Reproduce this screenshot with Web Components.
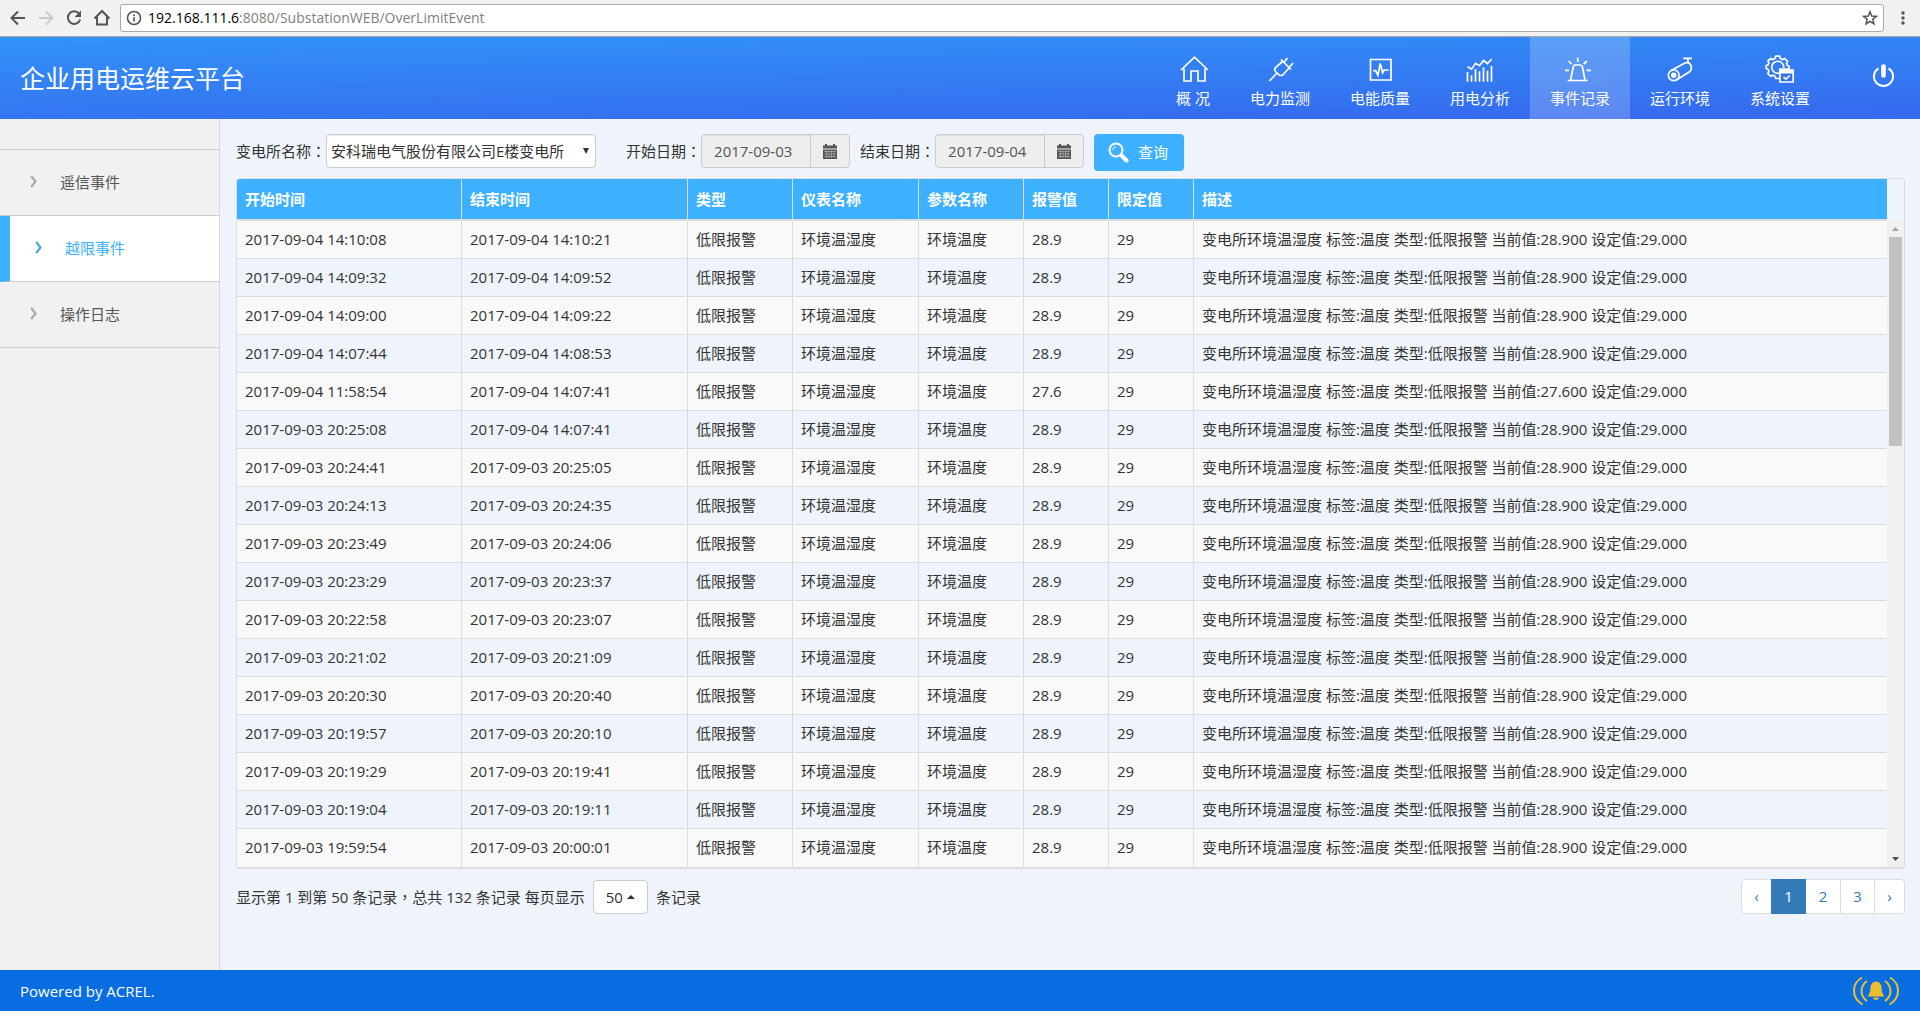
<!DOCTYPE html>
<html lang="zh-CN">
<head>
<meta charset="utf-8">
<title>企业用电运维云平台</title>
<style>
  html, body { margin: 0; height: 100%; }
  body {
    --cjk-center: "Noto Sans CJK TC";
    --blue: #3db1ff;
    --line: #ddd;
    font: 15px/20px "Open Sans", "Noto Sans CJK SC", sans-serif;
    color: #333;
    background: #eff4fc;
  }
</style>
</head>
<body>
<monitor-app></monitor-app>

<script>
const define = (name, html, setup) => {
  const template = document.createElement('template');
  template.innerHTML = `<style>*{box-sizing:border-box}</style>${html}`;
  customElements.define(name, class extends HTMLElement {
    constructor() {
      super();
      this.attachShadow({ mode: 'open' }).append(template.content.cloneNode(true));
    }
    connectedCallback() { if (setup) setup(this.shadowRoot, this); }
  });
};

/* Browser toolbar */
define('browser-bar', `
<style>
  :host { display: flex; align-items: center; height: 37px; padding: 0 8px 0 4px; background: #f1f1f1; border-bottom: 1px solid #a9a9a9; font-size: 14px; box-sizing: border-box; }
  button { border: 0; padding: 0; background: none; width: 28px; height: 28px; display: grid; place-items: center; }
  svg { display: block; fill: none; stroke: #555; stroke-width: 2; }
  .url { flex: 1; display: flex; align-items: center; height: 28px; margin-left: 4px; padding: 0 5px; background: #fff; border: 1px solid #a9a9a9; border-radius: 3px; gap: 6px; color: #808080; }
  .text { flex: 1; padding-bottom: 1px; }
  b { font-weight: 400; color: #000; }
  .more { width: 18px; margin-left: 10px; }
</style>
<button aria-label="后退"><svg width="20" height="20"><path d="M17 10H4M10 3.500L3.500 10L10 16.500"/></svg></button>
<button aria-label="前进"><svg width="20" height="20" style="stroke:#ccc"><path d="M3 10H16M10 3.500L16.500 10L10 16.500"/></svg></button>
<button aria-label="刷新"><svg width="20" height="20"><path d="M15 5.500A6.300 6.300 0 1 0 16.200 11.500"/><path d="M17 2.500V9H10.500Z" fill="#555" stroke="none"/></svg></button>
<button aria-label="主页"><svg width="20" height="20"><path d="M2.500 10.500L10 3L17.500 10.500M5 9V16.500H15V9"/></svg></button>
<div class="url">
  <svg width="16" height="16" style="stroke-width:1.600"><circle cx="8" cy="8" r="6.500"/><path d="M8 7V11.500M8 4.300V5.900"/></svg>
  <span class="text"><b>192.168.111.6</b>:8080/SubstationWEB/OverLimitEvent</span>
  <svg width="16" height="16" style="stroke-width:1.500"><path d="M8 1.800L9.700 6.100L14.300 6.400L10.800 9.300L11.900 13.800L8 11.300L4.100 13.800L5.200 9.300L1.700 6.400L6.300 6.100Z"/></svg>
</div>
<button class="more" aria-label="更多"><svg width="6" height="16" style="fill:#555;stroke:none"><circle cx="3" cy="3" r="1.700"/><circle cx="3" cy="8" r="1.700"/><circle cx="3" cy="13" r="1.700"/></svg></button>
`);

/* Header navigation entry: icon slot above, label slot below */
define('nav-item', `
<style>
  :host { display: block; }
  :host([active]) { background: rgba(255,255,255,.2); }
  a { display: flex; flex-direction: column; align-items: center; gap: 4px; height: 100%; padding: 17px 20px 0; color: #fff; text-decoration: none; white-space: pre; }
</style>
<a href="#"><slot name="icon"></slot><span><slot></slot></span></a>
`);

define('app-header', `
<style>
  :host { display: flex; height: 82px; padding: 0 24px 0 20px; color: #fff; background: linear-gradient(179deg, #3292f8, #3568ee); box-sizing: border-box; }
  h1 { flex: 1; margin: 0; align-self: center; font-size: 25px; line-height: 34px; font-weight: 400; }
  nav { display: flex; margin-right: 41px; }
  svg { display: block; width: 30px; height: 30px; overflow: visible; fill: none; stroke: #fff; stroke-width: 1.700; }
  .power { align-self: center; border: 0; padding: 0 0 4px; width: 25px; height: 30px; background: none; }
  .power svg { width: 25px; height: 25px; stroke-width: 2; }
</style>
<h1>企业用电运维云平台</h1>
<nav>
  <nav-item><svg slot="icon" viewBox="0 0 30 30"><path d="M3 16L16.500 3.200L30 16M6 14.500V27H13V17H20V27H27V14.500"/></svg>概 况</nav-item>
  <nav-item><svg slot="icon" viewBox="0 0 30 30"><path d="M16 5.500L26 15.500M17.500 7.500L10.500 13.500Q9 15.500 10.500 17.500L13.700 20.700Q15.700 22.300 18 20.700L24 14M4.500 27L12 19M19 8L22.500 4M24.500 13L28 9"/></svg>电力监测</nav-item>
  <nav-item><svg slot="icon" viewBox="0 0 30 30"><path d="M5.500 5.500H26V26H5.500ZM8 16.700H10.700L12.900 21.300L15.300 9.500L17.600 18.700L19.200 16H23.700"/></svg>电能质量</nav-item>
  <nav-item><svg slot="icon" viewBox="0 0 30 30"><path d="M2.500 18V27.700M6.500 21.300V27.700M10.500 15V27.700M14.500 17.300V27.700M18.500 13.300V27.700M22.500 16.700V27.700M26.500 12V27.700M2.700 12.700L6.500 15.200L10.500 9.300L14.500 11.700L18.500 6.500L22.500 9.500L26.700 5"/></svg>用电分析</nav-item>
  <nav-item active><svg slot="icon" viewBox="0 0 30 30"><path d="M5.700 26L8.200 13Q8.500 11 10.200 11H15.300Q17 11 17.400 13L20 26M2.700 26.500H22.700M12.700 3.500V8M3.500 7L6.700 10M22 7L18.700 10M0 16.300H4M21.500 16.300H26"/></svg>事件记录</nav-item>
  <nav-item><svg slot="icon" viewBox="0 0 30 30"><circle cx="8.700" cy="21.300" r="5.400"/><circle cx="8.700" cy="21.300" r="1.900" fill="#fff"/><path d="M6 16.600L19.500 9.200Q24 7.500 26 11.500Q27.300 15.500 24.500 17.800L11.500 26M18.300 4.300H27M23 4.300V9"/></svg>运行环境</nav-item>
  <nav-item><svg slot="icon" viewBox="0 0 30 30"><path d="M10 4.500L10.700 2.200H14.700L15.400 4.500L17.500 5.500L19.700 4.500L22.500 7.300L21.500 9.500L22.400 11.500L24.200 12.500V15H15V24.500H10.700L10 22.300L7.900 21.300L5.700 22.300L2.900 19.500L3.900 17.300L3 15.300L1.200 14.500V11.500L3 10.900L3.900 9L2.900 7L5.700 4.500L7.900 5.500Z"/><path d="M14.500 19A6 6 0 1 1 18.700 14"/><path d="M15 16.200H28.200V28H15Z" fill="#356fef"/><path d="M15 18H28.200" stroke-width="3"/><path d="M18.500 23L21 25.200L24.700 21.500"/></svg>系统设置</nav-item>
</nav>
<button class="power" aria-label="退出"><svg viewBox="0 0 25 25"><path d="M7.400 4.300A9.600 9.600 0 1 0 17.600 4.300"/><path d="M12.500 2.500V11.500" stroke-width="4.600" stroke-linecap="round"/></svg></button>
`);

/* Side menu */
define('menu-item', `
<style>
  :host { display: block; border-bottom: 1px solid #ccc; --arrow: #aaa; color: #555; }
  :host([active]) { background: #fff; border-left: 10px solid var(--blue); color: var(--blue); --arrow: #4fa5de; }
  a { display: flex; align-items: center; height: 65px; padding: 0 0 2px 30px; gap: 23px; color: inherit; text-decoration: none; }
  :host([active]) a { padding-left: 25px; }
  svg { fill: none; stroke: var(--arrow); stroke-width: 2.200; }
</style>
<a href="#"><svg width="7" height="13"><path d="M1.200 1L5.500 6.500L1.200 12"/></svg><slot></slot></a>
`);
define('side-menu', `
<style>
  :host { display: block; width: 220px; background: #f1f1f1; border-right: 1px solid #d8d8d8; box-sizing: border-box; }
  nav { margin-top: 30px; border-top: 1px solid #ccc; }
</style>
<nav><menu-item>遥信事件</menu-item><menu-item active>越限事件</menu-item><menu-item>操作日志</menu-item></nav>
`);

/* Read-only date with a calendar button */
define('date-field', `
<style>
  :host { display: flex; align-items: center; }
  i { font-style: normal; font-family: var(--cjk-center); }
  .group { display: flex; width: 149px; height: 34px; border: 1px solid #ccc; border-radius: 4px; background: #eee; overflow: hidden; }
  input { flex: 1; min-width: 0; border: 0; padding: 0 12px; background: none; color: #555; font: inherit; box-shadow: inset 0 1px 1px rgba(0,0,0,.075); }
  button { width: 39px; border: 0; border-left: 1px solid #ccc; background: none; padding: 0; display: grid; place-items: center; }
</style>
<label for="date"><slot></slot><i lang="zh-TW">：</i></label>
<div class="group"><input id="date" readonly><button aria-label="选择日期"><svg width="14" height="15" fill="#555"><path d="M0 1.500H2V0H4V1.500H10V0H12V1.500H14V4.500H0ZM0 5.500H14V15H0Z"/><path d="M1 7.500H13M1 10H13M1 12.500H13M3.500 6.500V14M6 6.500V14M8.500 6.500V14M11 6.500V14" stroke="#eee" stroke-width=".4"/></svg></button></div>
`, (root, host) => { root.querySelector('input').value = host.getAttribute('value'); });

define('filter-bar', `
<style>
  :host { display: flex; align-items: flex-start; height: 44px; }
  i { font-style: normal; font-family: var(--cjk-center); }
  .station { display: flex; align-items: center; margin-right: 30px; }
  .pick { display: grid; align-items: center; }
  .pick > * { grid-area: 1 / 1; }
  .pick svg { justify-self: end; margin-right: 7px; pointer-events: none; }
  select { appearance: none; width: 270px; height: 34px; border: 1px solid #ccc; border-radius: 4px; background: #fff; padding: 0 4px; font: inherit; color: inherit; box-shadow: inset 0 1px 1px rgba(0,0,0,.075); }
  date-field { margin-right: 10px; }
  .search { display: flex; align-items: center; gap: 9px; height: 37px; width: 90px; padding: 0 0 1px 14px; border: 0; border-radius: 4px; background: var(--blue); color: #fff; font: inherit; }
</style>
<div class="station"><label for="station">变电所名称<i lang="zh-TW">：</i></label>
<div class="pick"><select id="station"><option>安科瑞电气股份有限公司E楼变电所</option></select><svg width="6" height="6" fill="#333"><path d="M0 0H6L3 6Z"/></svg></div></div>
<date-field value="2017-09-03">开始日期</date-field>
<date-field value="2017-09-04">结束日期</date-field>
<button class="search"><svg width="21" height="21" fill="none" stroke="#fff"><circle cx="8" cy="8" r="6.500" stroke-width="2"/><path d="M4.800 7.800Q5 5 7.800 4.800" stroke-width="1"/><path d="M13.500 13.500L18.500 18.500" stroke-width="4" stroke-linecap="round"/></svg>查询</button>
`);

/* Event records */
const records = [
  ['2017-09-04 14:10:08', '2017-09-04 14:10:21'], ['2017-09-04 14:09:32', '2017-09-04 14:09:52'],
  ['2017-09-04 14:09:00', '2017-09-04 14:09:22'], ['2017-09-04 14:07:44', '2017-09-04 14:08:53'],
  ['2017-09-04 11:58:54', '2017-09-04 14:07:41', '27.6'], ['2017-09-03 20:25:08', '2017-09-04 14:07:41'],
  ['2017-09-03 20:24:41', '2017-09-03 20:25:05'], ['2017-09-03 20:24:13', '2017-09-03 20:24:35'],
  ['2017-09-03 20:23:49', '2017-09-03 20:24:06'], ['2017-09-03 20:23:29', '2017-09-03 20:23:37'],
  ['2017-09-03 20:22:58', '2017-09-03 20:23:07'], ['2017-09-03 20:21:02', '2017-09-03 20:21:09'],
  ['2017-09-03 20:20:30', '2017-09-03 20:20:40'], ['2017-09-03 20:19:57', '2017-09-03 20:20:10'],
  ['2017-09-03 20:19:29', '2017-09-03 20:19:41'], ['2017-09-03 20:19:04', '2017-09-03 20:19:11'],
  ['2017-09-03 19:59:54', '2017-09-03 20:00:01'],
];
define('event-table', `
<style>
  :host { display: grid; grid-template-columns: 1fr 17px; border: 1px solid var(--line); border-bottom-width: 2px; border-radius: 4px; overflow: hidden; }
  table { width: 100%; table-layout: fixed; border-collapse: separate; border-spacing: 0; }
  th, td { padding: 0 8px; text-align: left; white-space: nowrap; border-right: 1px solid var(--line); }
  th:last-child, td:last-child { border-right: 0; }
  th { height: 42px; background: var(--blue); color: #fff; font-weight: 700; border-bottom: 2px solid var(--line); }
  td { height: 38px; padding-bottom: 2px; border-bottom: 1px solid var(--line); }
  tr:last-child td { border-bottom: 0; }
  tbody tr:nth-child(odd) { background: #f9f9f9; }
  .bar { display: flex; flex-direction: column; align-items: center; margin-top: 41px; background: #f1f1f1; }
  .thumb { width: 13px; height: 209px; background: #c1c1c1; }
  .up, .down { display: block; padding: 7px 5px 6px; }
  .down { margin-top: auto; }
</style>
<table>
  <colgroup><col style="width:225px"><col style="width:226px"><col style="width:105px"><col style="width:126px"><col style="width:105px"><col style="width:85px"><col style="width:85px"><col></colgroup>
  <thead><tr><th>开始时间</th><th>结束时间</th><th>类型</th><th>仪表名称</th><th>参数名称</th><th>报警值</th><th>限定值</th><th>描述</th></tr></thead>
  <tbody></tbody>
</table>
<div class="bar" aria-hidden="true"><svg class="up" width="17" height="17" viewBox="0 0 7 4" fill="#a3a3a3"><path d="M0 4L3.500 0L7 4Z"/></svg><div class="thumb"></div><svg class="down" width="17" height="17" viewBox="0 0 7 4" fill="#505050"><path d="M0 0H7L3.500 4Z"/></svg></div>
`, root => {
  root.querySelector('tbody').innerHTML = records.map(([start, end, value = '28.9']) =>
    `<tr><td>${start}</td><td>${end}</td><td>低限报警</td><td>环境温湿度</td><td>环境温度</td><td>${value}</td><td>29</td><td>变电所环境温湿度 标签:温度 类型:低限报警 当前值:${value}00 设定值:29.000</td></tr>`).join('');
});

define('table-pager', `
<style>
  :host { display: flex; justify-content: space-between; align-items: flex-start; margin-top: 10px; }
  .info { display: flex; align-items: center; gap: 8px; height: 36px; }
  i { font-style: normal; font-family: var(--cjk-center); }
  .size { display: flex; align-items: center; gap: 4px; height: 34px; padding: 0 12px; background: #fff; border: 1px solid #ccc; border-radius: 4px; font: inherit; color: inherit; }
  nav { display: flex; background: #fff; border: 1px solid var(--line); border-radius: 4px; }
  a { width: 34px; height: 33px; line-height: 33px; text-align: center; color: #337ab7; text-decoration: none; border-left: 1px solid var(--line); }
  a:first-child { width: 29px; border: 0; }
  a:last-child { width: 30px; }
  a.on { width: 35px; height: 35px; line-height: 35px; margin: -1px 0; background: #337ab7; color: #fff; border: 0; }
  a.on + a { border-left: 0; }
</style>
<div class="info"><span>显示第 1 到第 50 条记录<i lang="zh-TW">，</i>总共 132 条记录 每页显示</span>
<button class="size">50<svg width="8" height="4" fill="#333"><path d="M0 4L4 0L8 4Z"/></svg></button><span>条记录</span></div>
<nav aria-label="分页"><a href="#">‹</a><a href="#" class="on">1</a><a href="#">2</a><a href="#">3</a><a href="#">›</a></nav>
`);

define('app-footer', `
<style>
  :host { display: flex; align-items: center; justify-content: space-between; height: 41px; padding: 0 20px; background: #086de0; color: #fff; box-sizing: border-box; }
</style>
<span>Powered by ACREL.</span>
<svg width="48" height="30" fill="none" stroke="#e9bf2f" stroke-width="2"><path d="M10 1.500Q2 6 2 15Q2 23.500 10.500 28.500M15 5Q9.500 9 9.500 15Q9.500 21 15 25M38 1.500Q46 6 46 15Q46 23.500 37.500 28.500M33 5Q38.500 9 38.500 15Q38.500 21 33 25"/><path d="M24 5.500Q29 6 29.500 11Q29.500 17 32.500 20.500H15.500Q18.500 17 18.500 11Q19 6 24 5.500ZM21 21.500H27Q26.500 24 24 24Q21.500 24 21 21.500Z" fill="#e9bf2f" stroke="none"/></svg>
`);

define('monitor-app', `
<style>
  :host { display: flex; flex-direction: column; min-height: 100vh; }
  .body { flex: 1; display: flex; }
  main { flex: 1; min-width: 0; padding: 15px 15px 20px 16px; }
</style>
<browser-bar></browser-bar>
<app-header></app-header>
<div class="body"><side-menu></side-menu><main><filter-bar></filter-bar><event-table></event-table><table-pager></table-pager></main></div>
<app-footer></app-footer>
`);
</script>
</body>
</html>
